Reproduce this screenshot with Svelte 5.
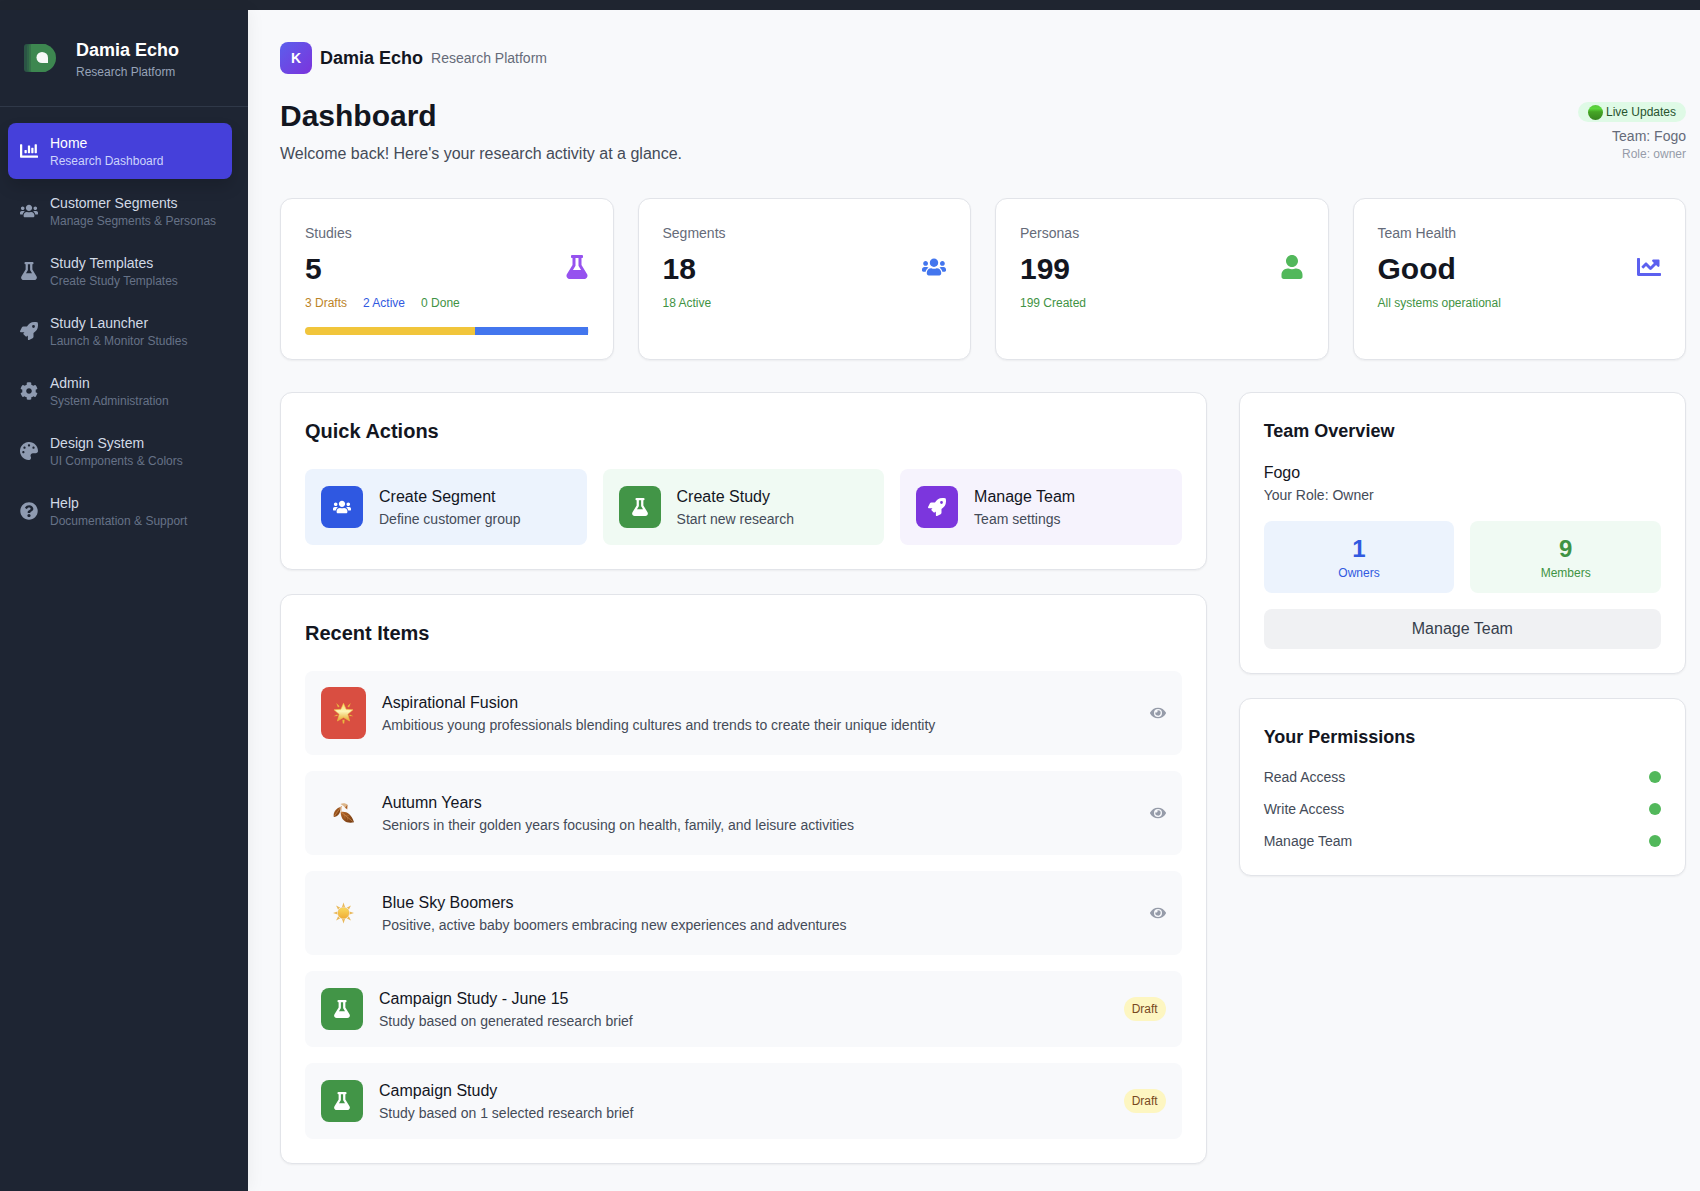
<script>
  const icons = {
    chartBar: { box: '0 0 512 512', d: 'M332.8 320h38.4c6.4 0 12.8-6.4 12.8-12.8V172.8c0-6.4-6.4-12.8-12.8-12.8h-38.4c-6.4 0-12.8 6.4-12.8 12.8v134.4c0 6.4 6.4 12.8 12.8 12.8zm96 0h38.4c6.4 0 12.8-6.4 12.8-12.8V76.8c0-6.4-6.4-12.8-12.8-12.8h-38.4c-6.4 0-12.8 6.4-12.8 12.8v230.4c0 6.4 6.4 12.8 12.8 12.8zm-288 0h38.4c6.4 0 12.8-6.4 12.8-12.8v-70.4c0-6.4-6.4-12.8-12.8-12.8h-38.4c-6.4 0-12.8 6.4-12.8 12.8v70.4c0 6.4 6.4 12.8 12.8 12.8zm96 0h38.4c6.4 0 12.8-6.4 12.8-12.8V108.8c0-6.4-6.4-12.8-12.8-12.8h-38.4c-6.4 0-12.8 6.4-12.8 12.8v198.4c0 6.4 6.4 12.8 12.8 12.8zM496 384H64V80c0-8.84-7.16-16-16-16H16C7.16 64 0 71.16 0 80v336c0 17.67 14.33 32 32 32h464c8.84 0 16-7.16 16-16v-32c0-8.84-7.16-16-16-16z' },
    users: { box: '0 0 640 512', d: 'M96 224c35.3 0 64-28.7 64-64s-28.7-64-64-64-64 28.7-64 64 28.7 64 64 64zm448 0c35.3 0 64-28.7 64-64s-28.7-64-64-64-64 28.7-64 64 28.7 64 64 64zm32 32h-64c-17.6 0-33.5 7.1-45.1 18.6 40.3 22.1 68.9 62 75.1 109.4h66c17.7 0 32-14.3 32-32v-32c0-35.3-28.7-64-64-64zm-256 0c61.9 0 112-50.1 112-112S381.9 32 320 32 208 82.1 208 144s50.1 112 112 112zm76.8 32h-8.3c-20.8 10-43.9 16-68.5 16s-47.6-6-68.5-16h-8.3C179.6 288 128 339.6 128 403.2V432c0 26.5 21.5 48 48 48h288c26.5 0 48-21.5 48-48v-28.8c0-63.6-51.6-115.2-115.2-115.2zm-223.7-13.4C161.5 263.1 145.6 256 128 256H64c-35.3 0-64 28.7-64 64v32c0 17.7 14.3 32 32 32h65.9c6.3-47.4 34.9-87.3 75.2-109.4z' },
    flask: { box: '0 0 448 512', d: 'M437.2 403.5L320 215V64h8c13.3 0 24-10.7 24-24V24c0-13.3-10.7-24-24-24H120c-13.3 0-24 10.7-24 24v16c0 13.3 10.7 24 24 24h8v151L10.8 403.5C-18.5 450.6 15.3 512 70.9 512h306.2c55.7 0 89.4-61.5 60.1-108.5zM137.9 320l48.2-77.6c3.7-5.2 5.8-11.6 5.8-18.4V64h64v160c0 6.9 2.2 13.2 5.8 18.4l48.2 77.6h-172z' },
    rocket: { box: '0 0 512 512', d: 'M505.12 19.09c-1.19-5.53-6.66-11-12.21-12.19C460.72 0 435.51 0 410.41 0 307.18 0 245.27 55.2 199.05 128H94.84c-16.35.02-35.56 11.88-42.89 26.48L2.52 253.3A28.4 28.4 0 0 0 0 264a24 24 0 0 0 24 24h103.82l-22.48 22.47c-11.36 11.36-13 32.26 0 45.25l50.91 50.9c11.15 11.19 32.15 13.16 45.27 0L224 384.16V488a24 24 0 0 0 24 24 28.56 28.56 0 0 0 10.71-2.52l98.73-49.39c14.63-7.3 26.51-26.5 26.51-42.86V312.8C456.54 266.48 512 204.39 512 101.7c.08-25.2.08-50.4-6.88-82.61zM384.04 168A40 40 0 1 1 424.05 128a40.02 40.02 0 0 1-40.01 40z' },
    cog: { box: '0 0 512 512', d: 'M487.4 315.7l-42.6-24.6c4.3-23.2 4.3-47 0-70.2l42.6-24.6c4.9-2.8 7.1-8.6 5.5-14-11.1-35.6-30-67.8-54.7-94.6-3.8-4.1-10-5.1-14.8-2.3L380.8 110c-17.9-15.4-38.5-27.3-60.8-35.1V25.8c0-5.6-3.9-10.5-9.4-11.7-36.7-8.2-74.3-7.8-109.2 0-5.5 1.2-9.4 6.1-9.4 11.7V75c-22.2 7.9-42.8 19.8-60.8 35.1L88.7 85.5c-4.9-2.8-11-1.9-14.8 2.3-24.7 26.7-43.6 58.9-54.7 94.6-1.7 5.4.6 11.2 5.5 14L67.3 221c-4.3 23.2-4.3 47 0 70.2l-42.6 24.6c-4.9 2.8-7.1 8.6-5.5 14 11.1 35.6 30 67.8 54.7 94.6 3.8 4.1 10 5.1 14.8 2.3l42.6-24.6c17.9 15.4 38.5 27.3 60.8 35.1v49.2c0 5.6 3.9 10.5 9.4 11.7 36.7 8.2 74.3 7.8 109.2 0 5.5-1.2 9.4-6.1 9.4-11.7v-49.2c22.2-7.9 42.8-19.8 60.8-35.1l42.6 24.6c4.9 2.8 11 1.9 14.8-2.3 24.7-26.7 43.6-58.9 54.7-94.6 1.5-5.5-.7-11.3-5.6-14.1zM256 336c-44.1 0-80-35.9-80-80s35.9-80 80-80 80 35.9 80 80-35.9 80-80 80z' },
    palette: { box: '0 0 512 512', d: 'M204.3 5C104.9 24.4 24.8 104.3 5.2 203.4c-37 187 131.7 326.4 258.8 306.7 41.2-6.4 61.4-54.6 42.5-91.7-23.1-45.4 9.9-98.4 60.9-98.4h79.7c35.8 0 64.8-29.6 64.9-65.3C511.5 97.1 368.1-26.9 204.3 5zM96 320c-17.7 0-32-14.3-32-32s14.3-32 32-32 32 14.3 32 32-14.3 32-32 32zm32-128c-17.7 0-32-14.3-32-32s14.3-32 32-32 32 14.3 32 32-14.3 32-32 32zm128-64c-17.7 0-32-14.3-32-32s14.3-32 32-32 32 14.3 32 32-14.3 32-32 32zm128 64c-17.7 0-32-14.3-32-32s14.3-32 32-32 32 14.3 32 32-14.3 32-32 32z' },
    question: { box: '0 0 512 512', d: 'M504 256c0 136.997-111.043 248-248 248S8 392.997 8 256C8 119.083 119.043 8 256 8s248 111.083 248 248zM262.655 90c-54.497 0-89.255 22.957-116.549 63.758-3.536 5.286-2.353 12.415 2.715 16.258l34.699 26.31c5.205 3.947 12.621 3.008 16.665-2.122 17.864-22.658 30.113-35.797 57.303-35.797 20.429 0 45.698 13.148 45.698 32.958 0 14.976-12.363 22.667-32.534 33.976C247.128 238.528 216 254.941 216 296v4c0 6.627 5.373 12 12 12h56c6.627 0 12-5.373 12-12v-1.333c0-28.462 83.186-29.647 83.186-106.667 0-58.002-60.165-102-116.531-102zM256 338c-25.365 0-46 20.635-46 46 0 25.364 20.635 46 46 46s46-20.636 46-46c0-25.365-20.635-46-46-46z' },
    user: { box: '0 0 448 512', d: 'M224 256c70.7 0 128-57.3 128-128S294.7 0 224 0 96 57.3 96 128s57.3 128 128 128zm89.6 32h-16.7c-22.2 10.2-46.9 16-72.9 16s-50.6-5.8-72.9-16h-16.7C60.2 288 0 348.2 0 422.4V464c0 26.5 21.5 48 48 48h352c26.5 0 48-21.5 48-48v-41.6c0-74.2-60.2-134.4-134.4-134.4z' },
    chartLine: { box: '0 0 512 512', d: 'M496 384H64V80c0-8.84-7.16-16-16-16H16C7.16 64 0 71.16 0 80v336c0 17.67 14.33 32 32 32h464c8.84 0 16-7.16 16-16v-32c0-8.84-7.16-16-16-16zM464 96H345.94c-21.38 0-32.09 25.85-16.97 40.97l32.4 32.4L288 242.75l-73.37-73.37c-12.5-12.5-32.76-12.5-45.25 0l-68.69 68.69c-6.25 6.25-6.25 16.38 0 22.63l22.62 22.62c6.25 6.25 16.38 6.25 22.63 0L192 237.25l73.37 73.37c12.5 12.5 32.76 12.5 45.25 0l96-96 32.4 32.4c15.12 15.12 40.97 4.41 40.97-16.97V112c.01-8.84-7.15-16-15.99-16z' },
    eye: { box: '0 0 576 512', d: 'M572.52 241.4C518.29 135.59 410.93 64 288 64S57.68 135.64 3.48 241.41a32.35 32.35 0 0 0 0 29.19C57.71 376.41 165.07 448 288 448s230.32-71.64 284.52-177.41a32.35 32.35 0 0 0 0-29.19zM288 400a144 144 0 1 1 144-144 143.93 143.93 0 0 1-144 144zm0-240a95.31 95.31 0 0 0-25.31 3.79 47.85 47.85 0 0 1-66.9 66.9A95.78 95.78 0 1 0 288 160z' }
  };

  const nav = [
    { icon: 'chartBar', title: 'Home', sub: 'Research Dashboard', active: true },
    { icon: 'users', title: 'Customer Segments', sub: 'Manage Segments & Personas' },
    { icon: 'flask', title: 'Study Templates', sub: 'Create Study Templates' },
    { icon: 'rocket', title: 'Study Launcher', sub: 'Launch & Monitor Studies' },
    { icon: 'cog', title: 'Admin', sub: 'System Administration' },
    { icon: 'palette', title: 'Design System', sub: 'UI Components & Colors' },
    { icon: 'question', title: 'Help', sub: 'Documentation & Support' }
  ];

  const drafts = 3;
  const running = 2;
  const studies = drafts + running;

  const stats = [
    { label: 'Studies', value: studies, icon: 'flask', tone: 'purple', bar: true, notes: [{ text: `${drafts} Drafts`, tone: 'amber' }, { text: `${running} Active`, tone: 'blue' }, { text: '0 Done', tone: 'green' }] },
    { label: 'Segments', value: '18', icon: 'users', tone: 'sky', notes: [{ text: '18 Active', tone: 'green' }] },
    { label: 'Personas', value: '199', icon: 'user', tone: 'leaf', notes: [{ text: '199 Created', tone: 'green' }] },
    { label: 'Team Health', value: 'Good', icon: 'chartLine', tone: 'indigo', notes: [{ text: 'All systems operational', tone: 'green' }] }
  ];

  const actions = [
    { icon: 'users', title: 'Create Segment', sub: 'Define customer group', tone: 'blue' },
    { icon: 'flask', title: 'Create Study', sub: 'Start new research', tone: 'green' },
    { icon: 'rocket', title: 'Manage Team', sub: 'Team settings', tone: 'purple' }
  ];

  const recent = [
    { emoji: 'star', title: 'Aspirational Fusion', sub: 'Ambitious young professionals blending cultures and trends to create their unique identity' },
    { emoji: 'leaf', title: 'Autumn Years', sub: 'Seniors in their golden years focusing on health, family, and leisure activities' },
    { emoji: 'sun', title: 'Blue Sky Boomers', sub: 'Positive, active baby boomers embracing new experiences and adventures' },
    { title: 'Campaign Study - June 15', sub: 'Study based on generated research brief' },
    { title: 'Campaign Study', sub: 'Study based on 1 selected research brief' }
  ];

  const permissions = ['Read Access', 'Write Access', 'Manage Team'];
  const rays = [0, 45, 90, 135, 180, 225, 270, 315];
</script>

{#snippet icon(name)}
  <svg class="icon" viewBox={icons[name].box} aria-hidden="true"><path d={icons[name].d} /></svg>
{/snippet}

{#snippet emoji(name)}
  <svg class="emoji" viewBox="0 0 21 21" aria-hidden="true">
    {#if name === 'star'}
      <defs>
        <linearGradient id="star-fill" x1="0" y1="0" x2="0" y2="1">
          <stop offset="0" stop-color="#f9d860" /><stop offset="0.45" stop-color="#fdf6b8" /><stop offset="1" stop-color="#e5a62c" />
        </linearGradient>
      </defs>
      <path d="M10.5 .8l2.600 6 6.900.5-5.200 4.500 1.800 6.700-6.100-3.600-6.100 3.600 1.800-6.700L1 7.300l6.900-.5z" fill="url(#star-fill)" stroke="#f0bd44" stroke-width=".6" stroke-linejoin="round" />
      <path d="M3.200.6l3.400 3.200-1.600 1.200zM17.800.6l-3.400 3.200 1.600 1.200zM.6 13.800l3.600-1.800.6 1.600zM20.400 13.800l-3.600-1.800-.6 1.600zM9.400 17.200h2.200l-.4 3.700H9.800z" fill="#e9b83e" />
    {:else if name === 'leaf'}
      <defs>
        <linearGradient id="leaf-fill" x1="0" y1="0" x2="1" y2="1">
          <stop offset="0" stop-color="#b5672a" /><stop offset="1" stop-color="#70380f" />
        </linearGradient>
      </defs>
      <path d="M7.500 4.500C3.500 5.500-.2 9.500.8 14.500 5 14 8 10.500 7.500 4.500z" fill="url(#leaf-fill)" />
      <path d="M7.600 9.500c5-1.200 11 1.500 13.400 10.300-6.200 1.400-13-.5-13.400-10.300z" fill="url(#leaf-fill)" />
      <path d="M7.500 1.500c2-1.200 5.500-1 7 .8l-1.500 4-2.500-2.800z" fill="#dcb58a" />
      <path d="M14.500 2.300l-.3 4.600-2-1.900z" fill="#a85c22" />
      <path d="M1.500 13.500L8.500 3.500l-.5 6 11.800 9.500" fill="none" stroke="#d99a5b" stroke-width=".6" />
      <path d="M11.300 12l.8 4.100M14.300 14.400l.5 3.300M12.700 13l3.500.2" fill="none" stroke="#c98448" stroke-width=".4" />
    {:else}
      <defs>
        <linearGradient id="sun-fill" x1="0" y1="0" x2="0" y2="1">
          <stop offset="0" stop-color="#fadb5e" /><stop offset="1" stop-color="#efac35" />
        </linearGradient>
      </defs>
      {#each rays as angle}
        <path d="M9 4.600L10.500 0 12 4.600z" fill="#e9b858" transform="rotate({angle} 10.500 10.500)" />
      {/each}
      <circle cx="10.500" cy="10.500" r="6.200" fill="#f8f9fb" />
      <circle cx="10.500" cy="10.500" r="5.600" fill="url(#sun-fill)" stroke="#eab04a" stroke-width=".5" />
    {/if}
  </svg>
{/snippet}

<div class="shell">
  <div class="topbar"></div>
  <div class="body">
    <aside class="sidebar">
      <div class="brand">
        <span class="brand-mark">
          <svg viewBox="0 0 32 28" aria-hidden="true">
            <rect width="20" height="28" rx="3" fill="#2b5545" />
            <rect x="3" width="20" height="28" rx="3" fill="#2f6448" />
            <rect x="5" width="18" height="28" rx="2" fill="#36744a" />
            <path d="M8 0h10a14 14 0 0 1 0 28H8a1 1 0 0 1-1-1V1a1 1 0 0 1 1-1z" fill="#3d8750" />
            <path d="M18 8a6 5.500 0 0 1 6 5.500V19h-6a5.500 5.500 0 0 1 0-11z" fill="#f7f9f8" />
          </svg>
        </span>
        <div>
          <div class="brand-name">Damia Echo</div>
          <div class="brand-sub">Research Platform</div>
        </div>
      </div>
      <nav class="nav" aria-label="Main">
        {#each nav as item}
          <a class="nav-item" class:active={item.active} href="#{item.icon}" aria-current={item.active ? 'page' : undefined}>
            {@render icon(item.icon)}
            <span class="nav-text">
              <span class="nav-title">{item.title}</span>
              <span class="nav-sub">{item.sub}</span>
            </span>
          </a>
        {/each}
      </nav>
    </aside>

    <main class="main">
      <div class="product">
        <span class="product-mark">K</span>
        <span class="product-name">Damia Echo</span>
        <span class="product-sub">Research Platform</span>
      </div>

      <header class="page-head">
        <div>
          <h1>Dashboard</h1>
          <p class="welcome">Welcome back! Here's your research activity at a glance.</p>
        </div>
        <div class="status">
          <span class="live">
            <svg viewBox="0 0 15 15" aria-hidden="true">
              <defs>
                <linearGradient id="live-fill" x1="0" y1="0" x2="0" y2="1">
                  <stop offset="0" stop-color="#58c83c" /><stop offset="0.25" stop-color="#5ad83a" /><stop offset="0.45" stop-color="#46a626" /><stop offset="1" stop-color="#378420" />
                </linearGradient>
              </defs>
              <circle cx="7.500" cy="7.500" r="7.500" fill="url(#live-fill)" />
            </svg>
            Live Updates
          </span>
          <span class="team">Team: Fogo</span>
          <span class="role">Role: owner</span>
        </div>
      </header>

      <section class="stats" aria-label="Statistics">
        {#each stats as stat}
          <article class="card">
            <div class="stat-row">
              <div>
                <div class="stat-label">{stat.label}</div>
                <div class="stat-value">{stat.value}</div>
                <div class="stat-notes">
                  {#each stat.notes as note}
                    <span class="text-{note.tone}">{note.text}</span>
                  {/each}
                </div>
              </div>
              <span class="stat-icon text-{stat.tone}">{@render icon(stat.icon)}</span>
            </div>
            {#if stat.bar}
              <div class="bar">
                <div class="bar-draft" style:width="{(drafts / studies) * 100}%"></div>
                <div class="bar-active" style:width="{(running / studies) * 100}%"></div>
              </div>
            {/if}
          </article>
        {/each}
      </section>

      <div class="columns">
        <div class="stack">
          <section class="card">
            <h2>Quick Actions</h2>
            <div class="actions">
              {#each actions as action}
                <a class="tile tint-{action.tone}" href="#{action.tone}">
                  <span class="badge-icon fill-{action.tone}">{@render icon(action.icon)}</span>
                  <span class="tile-text">
                    <span class="tile-title">{action.title}</span>
                    <span class="tile-sub">{action.sub}</span>
                  </span>
                </a>
              {/each}
            </div>
          </section>

          <section class="card">
            <h2>Recent Items</h2>
            <div class="recent">
              {#each recent as item}
                <div class="tile">
                  {#if item.emoji}
                    <span class="badge-icon" class:fill-red={item.emoji === 'star'}>{@render emoji(item.emoji)}</span>
                  {:else}
                    <span class="badge-icon fill-green">{@render icon('flask')}</span>
                  {/if}
                  <div class="tile-text">
                    <span class="tile-title">{item.title}</span>
                    <span class="tile-sub">{item.sub}</span>
                  </div>
                  {#if item.emoji}
                    <button class="view" type="button" aria-label="View {item.title}">{@render icon('eye')}</button>
                  {:else}
                    <span class="draft">Draft</span>
                  {/if}
                </div>
              {/each}
            </div>
          </section>
        </div>

        <div class="stack">
          <section class="card">
            <h3>Team Overview</h3>
            <div class="tile-title">Fogo</div>
            <div class="tile-sub">Your Role: Owner</div>
            <div class="counts">
              <div class="count tint-blue text-blue"><strong>1</strong><span>Owners</span></div>
              <div class="count tint-green text-green"><strong>9</strong><span>Members</span></div>
            </div>
            <button class="manage" type="button">Manage Team</button>
          </section>

          <section class="card">
            <h3>Your Permissions</h3>
            <ul class="permissions">
              {#each permissions as permission}
                <li>{permission}<span class="dot"></span></li>
              {/each}
            </ul>
          </section>
        </div>
      </div>
    </main>
  </div>
</div>

<style>
  :global(body) {
    margin: 0;
    background: #f8f9fb;
  }

  .shell,
  .shell :global(*) {
    box-sizing: border-box;
  }

  .shell {
    display: flex;
    flex-direction: column;
    min-height: 100vh;
    font-family: "Liberation Sans", Arial, sans-serif;
    font-size: 16px;
    line-height: 24px;
    color: #13161f;
  }

  .topbar {
    height: 10px;
    background: #1f2530;
  }

  .body {
    display: flex;
    flex: 1;
  }

  a {
    color: inherit;
    text-decoration: none;
  }

  button {
    border: 0;
    padding: 0;
    background: none;
    font: inherit;
    cursor: pointer;
  }

  .icon {
    display: block;
    flex: none;
    width: 1em;
    height: 1em;
    fill: currentColor;
  }

  .sidebar {
    flex: none;
    width: 248px;
    background: #1e2533;
    box-shadow: 2px 0 16px rgba(0, 0, 0, 0.05);
  }

  .brand {
    display: flex;
    align-items: center;
    gap: 12px;
    padding: 24px 16px;
    border-bottom: 1px solid #2f3848;
  }

  .brand-mark {
    display: flex;
    align-items: center;
    justify-content: center;
    width: 48px;
    height: 48px;
  }

  .brand-mark svg {
    width: 32px;
    height: 28px;
  }

  .brand-name {
    font-size: 18px;
    font-weight: 700;
    line-height: 28px;
    color: #fff;
  }

  .brand-sub {
    font-size: 12px;
    line-height: 16px;
    color: #97a3b8;
  }

  .nav {
    display: flex;
    flex-direction: column;
    gap: 4px;
    padding: 16px 16px 16px 8px;
  }

  .nav-item {
    display: flex;
    align-items: center;
    gap: 12px;
    padding: 10px 12px;
    border-radius: 8px;
    color: #d2dae6;
  }

  .nav-item .icon {
    font-size: 18px;
    color: #8f9bb1;
  }

  .nav-text,
  .tile-text {
    display: flex;
    flex-direction: column;
  }

  .nav-title {
    font-size: 14px;
    line-height: 20px;
  }

  .nav-sub {
    font-size: 12px;
    line-height: 16px;
    color: #667287;
  }

  .nav-item.active {
    background: #4540da;
    color: #fff;
    box-shadow: 0 8px 15px rgba(0, 0, 0, 0.15);
  }

  .nav-item.active .icon {
    color: #fff;
  }

  .nav-item.active .nav-sub {
    color: #ccd4fc;
  }

  .main {
    flex: 1;
    min-width: 0;
    padding: 32px 14px 24px 32px;
  }

  .product {
    display: flex;
    align-items: center;
    gap: 8px;
    margin-bottom: 24px;
  }

  .product-mark {
    display: flex;
    align-items: center;
    justify-content: center;
    width: 32px;
    height: 32px;
    border-radius: 8px;
    background: linear-gradient(135deg, #5b5fec, #7c33dc);
    color: #fff;
    font-size: 14px;
    font-weight: 700;
  }

  .product-name {
    font-size: 18px;
    font-weight: 700;
  }

  .product-sub {
    font-size: 14px;
    color: #656b79;
  }

  .page-head {
    display: flex;
    align-items: center;
    justify-content: space-between;
    margin-bottom: 32px;
  }

  h1,
  h2,
  h3,
  p {
    margin: 0;
  }

  h1 {
    font-size: 30px;
    line-height: 36px;
  }

  h2 {
    margin-bottom: 24px;
    font-size: 20px;
    line-height: 28px;
  }

  h3 {
    margin-bottom: 16px;
    font-size: 18px;
    line-height: 28px;
  }

  .welcome {
    margin-top: 8px;
    color: #444b58;
  }

  .status {
    display: flex;
    flex-direction: column;
    align-items: flex-end;
  }

  .live {
    display: flex;
    align-items: center;
    gap: 3px;
    margin-bottom: 4px;
    padding: 2px 10px;
    border-radius: 999px;
    background: #dffae6;
    font-size: 12px;
    line-height: 16px;
    color: #28532f;
  }

  .live svg {
    width: 15px;
    height: 15px;
  }

  .team {
    font-size: 14px;
    line-height: 20px;
    color: #656b79;
  }

  .role {
    font-size: 12px;
    line-height: 16px;
    color: #969ca9;
  }

  .card {
    padding: 24px;
    border: 1px solid #e2e4e9;
    border-radius: 12px;
    background: #fff;
    box-shadow: 0 1px 2px rgba(0, 0, 0, 0.05);
  }

  .stats {
    display: grid;
    grid-template-columns: repeat(4, 1fr);
    gap: 24px;
    margin-bottom: 32px;
  }

  .stat-row {
    display: flex;
    align-items: center;
    justify-content: space-between;
  }

  .stat-label {
    font-size: 14px;
    line-height: 20px;
    color: #656b79;
  }

  .stat-value {
    margin: 8px 0;
    font-size: 30px;
    font-weight: 700;
    line-height: 36px;
  }

  .stat-notes {
    display: flex;
    gap: 16px;
    font-size: 12px;
    line-height: 16px;
  }

  .stat-icon {
    font-size: 24px;
  }

  .bar {
    display: flex;
    height: 8px;
    margin-top: 16px;
    border-radius: 999px;
    background: #e5e7eb;
  }

  .bar-draft {
    border-radius: 999px 0 0 999px;
    background: #f1c53b;
  }

  .bar-active {
    background: #4376ee;
  }

  .text-amber { color: #bc8427; }
  .text-blue { color: #3159e0; }
  .text-green { color: #3f9344; }
  .text-purple { color: #9652ef; }
  .text-sky { color: #4376ee; }
  .text-leaf { color: #52b85b; }
  .text-indigo { color: #5c60ef; }

  .columns {
    display: grid;
    grid-template-columns: repeat(3, 1fr);
    gap: 32px;
    align-items: start;
  }

  .columns > :first-child {
    grid-column: span 2;
  }

  .stack {
    display: flex;
    flex-direction: column;
    gap: 24px;
  }

  .actions {
    display: grid;
    grid-template-columns: repeat(3, 1fr);
    gap: 16px;
  }

  .recent {
    display: flex;
    flex-direction: column;
    gap: 16px;
  }

  .tile {
    display: flex;
    align-items: center;
    gap: 16px;
    padding: 16px;
    border-radius: 8px;
    background: #f8f9fb;
  }

  .tile-text {
    flex: 1;
    min-width: 0;
  }

  .badge-icon {
    flex: none;
    padding: 12px;
    border-radius: 8px;
    font-size: 18px;
    color: #fff;
  }

  .emoji {
    display: block;
    width: 21px;
    height: 28px;
  }

  .tile-title {
    font-size: 16px;
    line-height: 24px;
  }

  .tile-sub {
    font-size: 14px;
    line-height: 20px;
    color: #444b58;
  }

  .tint-blue { background: #ecf3fd; }
  .tint-green { background: #f0faf3; }
  .tint-purple { background: #f6f3fd; }
  .fill-blue { background: #2f58e1; }
  .fill-green { background: #429547; }
  .fill-purple { background: #7c36dd; }
  .fill-red { background: #d94e41; }

  .view {
    font-size: 16px;
    color: #969ca9;
  }

  .draft {
    padding: 4px 8px;
    border-radius: 999px;
    background: #fdf6c1;
    font-size: 12px;
    line-height: 16px;
    color: #78491f;
  }

  .counts {
    display: grid;
    grid-template-columns: 1fr 1fr;
    gap: 16px;
    margin: 16px 0;
  }

  .count {
    display: flex;
    flex-direction: column;
    align-items: center;
    padding: 12px;
    border-radius: 8px;
    font-size: 12px;
    line-height: 16px;
  }

  .count strong {
    font-size: 24px;
    line-height: 32px;
  }

  .manage {
    display: block;
    width: 100%;
    padding: 8px 16px;
    border-radius: 8px;
    background: #f0f1f3;
    color: #363e4c;
  }

  .permissions {
    display: flex;
    flex-direction: column;
    gap: 12px;
    margin: 0;
    padding: 0;
    list-style: none;
    font-size: 14px;
    line-height: 20px;
    color: #444b58;
  }

  .permissions li {
    display: flex;
    align-items: center;
    justify-content: space-between;
  }

  .dot {
    width: 12px;
    height: 12px;
    border-radius: 50%;
    background: #52b85b;
  }
</style>
